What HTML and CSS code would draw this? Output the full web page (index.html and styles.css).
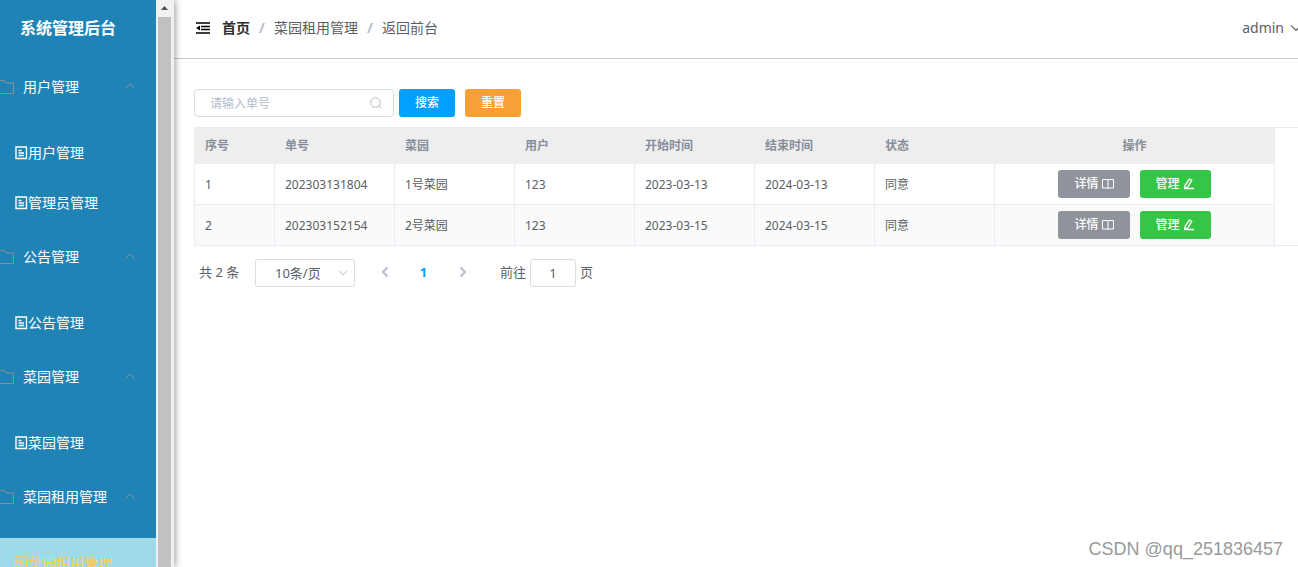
FILE: index.html
```html
<!DOCTYPE html>
<html lang="zh-CN">
<head>
<meta charset="utf-8">
<title>系统管理后台</title>
<link rel="stylesheet" href="styles.css">
</head>
<body>
<svg class="sprite" aria-hidden="true">
  <symbol id="folder" viewBox="0 0 16 14"><path d="M.5.500h5.500l2.500 2.500h7v10.500H.5z" fill="none" stroke="currentColor" stroke-width="1.100"/></symbol>
  <symbol id="up" viewBox="0 0 10 10"><path d="M.5 6.500l4.500-4.500 4.500 4.500" fill="none" stroke="currentColor"/></symbol>
  <symbol id="down" viewBox="0 0 10 10"><path d="M1 3l4 4 4-4" fill="none" stroke="currentColor"/></symbol>
  <symbol id="doc" viewBox="0 0 13 14"><path d="M1 1h10.500v11.500H1zM3.500 4.500h3M3.500 7h5.500M3.500 9.500h5.500" fill="none" stroke="currentColor" stroke-width="1.400"/></symbol>
  <symbol id="book" viewBox="0 0 12 12"><path d="M.5 1.500h4.500l1 .5 1-.5h4.500v8.500H7l-1 .5-1-.5H.5zM6 2v8.500" fill="none" stroke="currentColor"/></symbol>
  <symbol id="pen" viewBox="0 0 12 12"><path d="M6.500 1l2.300 1.300-4 6.500-3.100 1.700.3-3.200zM2 10.500h9" fill="none" stroke="currentColor" stroke-width="1.300" stroke-linejoin="round"/></symbol>
</svg>
<aside class="sidebar">
  <nav class="menu">
    <h1 class="brand">系统管理后台</h1>
    <section class="group">
      <button class="group-title" type="button"><svg class="folder"><use href="#folder"/></svg><span>用户管理</span><svg class="chevron"><use href="#up"/></svg></button>
      <a class="item" href="#"><svg class="doc"><use href="#doc"/></svg>用户管理</a>
      <a class="item" href="#"><svg class="doc"><use href="#doc"/></svg>管理员管理</a>
    </section>
    <section class="group">
      <button class="group-title" type="button"><svg class="folder"><use href="#folder"/></svg><span>公告管理</span><svg class="chevron"><use href="#up"/></svg></button>
      <a class="item" href="#"><svg class="doc"><use href="#doc"/></svg>公告管理</a>
    </section>
    <section class="group">
      <button class="group-title" type="button"><svg class="folder"><use href="#folder"/></svg><span>菜园管理</span><svg class="chevron"><use href="#up"/></svg></button>
      <a class="item" href="#"><svg class="doc"><use href="#doc"/></svg>菜园管理</a>
    </section>
    <section class="group">
      <button class="group-title" type="button"><svg class="folder"><use href="#folder"/></svg><span>菜园租用管理</span><svg class="chevron"><use href="#up"/></svg></button>
      <a class="item active" href="#"><svg class="doc"><use href="#doc"/></svg>菜园租用管理</a>
    </section>
  </nav>
  <div class="scrollbar">
    <svg class="scroll-up" viewBox="0 0 17 17"><path d="M5 10h7L8.500 6z" fill="#505050"/></svg>
    <div class="thumb"></div>
  </div>
</aside>
<div class="page">
  <header class="topbar">
    <svg class="fold" viewBox="0 0 14 12"><path d="M0 1h14M5 4.500h9M5 7.500h9M0 11h14" stroke="#000" stroke-width="1.600"/><path d="M0 6l4-2.500v5z"/></svg>
    <nav class="crumbs">
      <a class="home" href="#">首页</a><span class="slash">/</span><a href="#">菜园租用管理</a><span class="slash">/</span><a href="#">返回前台</a>
    </nav>
    <button class="user" type="button">admin<svg class="user-arrow"><use href="#down"/></svg></button>
  </header>
  <main class="content">
    <form class="filters">
      <label class="search">
        <input type="text" placeholder="请输入单号" aria-label="单号">
        <svg class="magnifier" viewBox="0 0 12 12"><circle cx="5.500" cy="5.500" r="4.800"/><path d="M8.800 8.800l2.400 2.400"/></svg>
      </label>
      <button class="btn primary" type="button">搜索</button>
      <button class="btn warning" type="button">重置</button>
    </form>
    <div class="table-box">
      <table class="table">
        <colgroup><col class="col-index"><col span="6" class="col-data"><col class="col-actions"></colgroup>
        <thead>
          <tr><th>序号</th><th>单号</th><th>菜园</th><th>用户</th><th>开始时间</th><th>结束时间</th><th>状态</th><th class="actions">操作</th></tr>
        </thead>
        <tbody>
          <tr><td>1</td><td>202303131804</td><td>1号菜园</td><td>123</td><td>2023-03-13</td><td>2024-03-13</td><td>同意</td>
            <td class="button-cell"><div class="row-buttons"><button class="btn info" type="button">详情<svg><use href="#book"/></svg></button><button class="btn success" type="button">管理<svg><use href="#pen"/></svg></button></div></td></tr>
          <tr><td>2</td><td>202303152154</td><td>2号菜园</td><td>123</td><td>2023-03-15</td><td>2024-03-15</td><td>同意</td>
            <td class="button-cell"><div class="row-buttons"><button class="btn info" type="button">详情<svg><use href="#book"/></svg></button><button class="btn success" type="button">管理<svg><use href="#pen"/></svg></button></div></td></tr>
        </tbody>
      </table>
    </div>
    <div class="pagination">
      <span class="total">共 2 条</span>
      <div class="size">
        <select aria-label="每页条数"><option>10条/页</option></select>
        <svg><use href="#down"/></svg>
      </div>
      <div class="pager">
        <button type="button" aria-label="上一页"><svg viewBox="0 0 8 12"><path d="M6.500 1.500L2 6l4.500 4.500"/></svg></button>
        <button type="button" class="current">1</button>
        <button type="button" aria-label="下一页"><svg viewBox="0 0 8 12"><path d="M1.500 1.500L6 6l-4.500 4.500"/></svg></button>
      </div>
      <label class="jump">前往<input type="text" value="1">页</label>
    </div>
  </main>
</div>
<div class="watermark">CSDN @qq_251836457</div>
</body>
</html>
```
FILE: styles.css
```css
* { box-sizing: border-box; }
body {
  margin: 0;
  height: 100vh;
  display: flex;
  overflow: hidden;
  background: #fff;
  color: #5a5e66;
  font: 14px/20px "Noto Sans", "Noto Sans CJK SC", sans-serif;
}
button, input, select { font: inherit; color: inherit; margin: 0; }
button { border: 0; padding: 0; background: none; cursor: pointer; }
a { color: inherit; text-decoration: none; }
svg { flex: none; }
.sprite { position: absolute; width: 0; height: 0; }

.sidebar {
  flex: none;
  display: flex;
  height: 100vh;
  padding-right: 1px;
  background: #f1f1f1;
  position: relative;
  z-index: 1;
  box-shadow: 2px 0 6px rgba(0, 21, 41, 0.35);
}
.menu { width: 156px; overflow: hidden; background: #1f84b5; color: #fff; }
.brand {
  margin: 0;
  height: 59px;
  padding-left: 20px;
  font-size: 16px;
  line-height: 56px;
}
.group { padding-bottom: 1px; }
.group-title {
  display: flex;
  align-items: center;
  width: 100%;
  height: 56px;
  margin-bottom: 13px;
  padding-right: 21px;
  text-align: left;
}
.group-title span { flex: 1; }
.folder { width: 16px; height: 14px; margin: 0 9px 0 -2px; color: #878d99; }
.chevron { width: 10px; height: 10px; color: #878d99; }
.item { display: flex; align-items: center; height: 50px; padding-left: 15px; }
.doc { width: 13px; height: 14px; }
.item.active { background: #9fdae8; color: #ffd04b; }
.scrollbar { width: 17px; display: flex; flex-direction: column; }
.scroll-up { width: 17px; height: 17px; }
.thumb { flex: 1; margin: 0 2px; background: #c1c1c1; }

.page { flex: 1; min-width: 0; }
.topbar {
  display: flex;
  align-items: center;
  height: 59px;
  padding: 0 0 2px 22px;
  border-bottom: 1px solid #ccc;
}
.fold { width: 14px; height: 12px; margin-right: 12px; }
.crumbs { display: flex; flex: 1; }
.home { color: #2d2f33; font-weight: 700; }
.slash { width: 24px; text-align: center; color: #b4bccc; font-weight: 700; }
.user { display: flex; align-items: center; gap: 6px; margin-right: -4px; }
.user-arrow { width: 12px; height: 12px; }

.content { padding: 30px 0 0 20px; font-size: 12px; }
.filters { display: flex; }
.search { position: relative; width: 200px; margin-right: 5px; }
.search input {
  width: 100%;
  height: 28px;
  padding: 0 30px 0 15px;
  border: 1px solid #d8dce5;
  border-radius: 4px;
  background: #fff;
}
.search input::placeholder { color: #b4bccc; opacity: 1; }
.magnifier {
  position: absolute;
  right: 12px;
  top: 8px;
  width: 12px;
  height: 12px;
  fill: none;
  stroke: #b4bccc;
}
.btn {
  display: flex;
  align-items: center;
  justify-content: center;
  gap: 3px;
  height: 28px;
  padding: 0 16px;
  border-radius: 3px;
  color: #fff;
  font-weight: 500;
}
.btn svg { width: 12px; height: 12px; }
.primary { background: #00a0ff; }
.warning { background: #f7a035; margin-left: 10px; }
.info { background: #8f939b; }
.success { background: #35c648; }

.table-box {
  margin-top: 10px;
  border: 1px solid #e6ebf5;
  border-width: 1px 0 0 1px;
  box-shadow: inset 0 -1px #e6ebf5;
}
.table { width: 1080px; table-layout: fixed; border-collapse: separate; border-spacing: 0; }
.col-index { width: 80px; }
.col-data { width: 120px; }
.col-actions { width: 280px; }
.table th, .table td {
  padding: 0 10px;
  text-align: left;
  border-right: 1px solid #e6ebf5;
  border-bottom: 1px solid #e6ebf5;
}
.table th { height: 36px; background: #eee; border-bottom-color: #eee; color: #878d99; font-weight: 700; }
.table td { height: 41px; padding-top: 2px; }
.table .button-cell { padding-top: 0; }
.table .actions { text-align: center; }
.table tbody tr:nth-child(even) { background: #fafafa; }
.row-buttons { display: flex; justify-content: center; gap: 10px; }

.pagination { display: flex; margin-top: 13px; padding-left: 5px; font-size: 13px; line-height: 26px; }
.total { width: 56px; }
.size { position: relative; width: 100px; }
.size select {
  appearance: none;
  display: block;
  width: 100%;
  height: 28px;
  padding: 0 19px 2px;
  border: 1px solid #d8dce5;
  border-radius: 3px;
  background: #fff;
}
.size svg { position: absolute; right: 7px; top: 9px; width: 10px; height: 10px; color: #b4bccc; pointer-events: none; }
.pager { display: flex; margin: 0 18px 0 10px; }
.pager button { display: flex; align-items: center; justify-content: center; width: 39px; height: 26px; }
.pager svg { width: 8px; height: 12px; fill: none; stroke: #b4bccc; stroke-width: 2; }
.pager .current { color: #00a0ff; font-weight: 700; }
.jump { display: flex; gap: 4px; }
.jump input {
  width: 46px;
  height: 28px;
  padding: 0;
  border: 1px solid #d8dce5;
  border-radius: 3px;
  text-align: center;
}
.watermark {
  position: absolute;
  right: 15px;
  bottom: 8px;
  color: #999;
  font: 18px/20px "Liberation Sans", sans-serif;
}
```
